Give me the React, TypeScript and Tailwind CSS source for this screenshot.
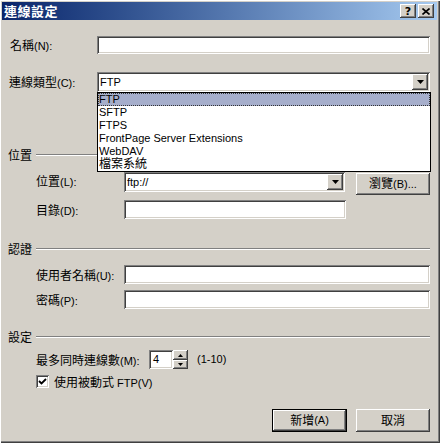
import React from "react";

const CJK = /([\u3000-\u9fff\uff00-\uffef]+)/;

function T({ children }: { children: string }) {
  const parts = children.split(CJK).filter((p) => p.length > 0);
  return (
    <>
      {parts.map((p, i) =>
        CJK.test(p) ? (
          <span key={i} className="text-[12px]">
            {p}
          </span>
        ) : (
          <span key={i} className="text-[11px]">
            {p}
          </span>
        )
      )}
    </>
  );
}

const SUNK =
  "shadow-[inset_1px_1px_#808080,inset_-1px_-1px_#ffffff,inset_2px_2px_#404040,inset_-2px_-2px_#d4d0c8]";
const RAISED =
  "shadow-[inset_-1px_-1px_#404040,inset_1px_1px_#ffffff,inset_-2px_-2px_#808080,inset_2px_2px_#d4d0c8]";

function DownArrow() {
  return (
    <svg width="7" height="4" viewBox="0 0 7 4">
      <polygon points="0,0 7,0 3.5,4" fill="#000" />
    </svg>
  );
}

function Header({ text, mt }: { text: string; mt: string }) {
  return (
    <div className={`flex items-center h-[13px] ${mt}`}>
      <span className="ml-[6px] leading-none">
        <T>{text}</T>
      </span>
      <div className="flex-1 ml-[4px] mr-[7px] h-[2px] border-t border-t-[#808080] border-b border-b-white" />
    </div>
  );
}

export default function App() {
  return (
    <div className="w-[440px] h-[443px] bg-[#d4d0c8] pl-[2px] pt-[2px] pr-[3px] pb-[3px] flex flex-col text-black font-['Liberation_Sans','Noto_Sans_CJK_TC',sans-serif] shadow-[inset_1px_1px_#ffffff,inset_-1px_-1px_#404040,inset_-2px_-2px_#808080]">
      {/* Title bar */}
      <div className="h-[18px] flex items-center bg-linear-to-r from-[#0a246a] to-[#a6caf0] pl-[2px] pr-[3px]">
        <span className="text-white font-bold text-[13px] leading-none tracking-[0.5px]">連線設定</span>
        <div className="flex-1" />
        <div className={`w-[16px] h-[14px] bg-[#d4d0c8] ${RAISED} flex items-center justify-center`}>
          <span className="text-[11px] font-bold leading-none font-['DejaVu_Sans',sans-serif]">?</span>
        </div>
        <div className={`ml-[2px] w-[16px] h-[14px] bg-[#d4d0c8] ${RAISED} flex items-center justify-center`}>
          <svg width="8" height="7" viewBox="0 0 8 7">
            <path d="M0.5 0.5 L7.5 6.5 M7.5 0.5 L0.5 6.5" stroke="#000" strokeWidth="1.6" />
          </svg>
        </div>
      </div>

      {/* Body */}
      <div className="flex flex-col">
        {/* Name */}
        <div className="flex items-center mt-[16px] h-[18px]">
          <div className="ml-[8px] w-[87px]">
            <T>名稱(N):</T>
          </div>
          <div className={`w-[333px] h-[18px] bg-white ${SUNK}`} />
        </div>

        {/* Type */}
        <div className="flex items-center mt-[18px] h-[20px]">
          <div className="ml-[7px] w-[88px]">
            <T>連線類型(C):</T>
          </div>
          <div className="relative w-[333px] h-[20px]">
            <div className={`w-full h-full bg-white ${SUNK} flex items-center pl-[3px] pr-[2px]`}>
              <span className="flex-1 text-[11px] leading-none">FTP</span>
              <div className={`w-[16px] h-[16px] bg-[#d4d0c8] ${RAISED} flex items-center justify-center`}>
                <DownArrow />
              </div>
            </div>
            <div className="absolute left-0 top-[20px] w-[334px] h-[80px] bg-white border border-black z-10 flex flex-col text-[11px]">
              <div className="h-[13px] leading-[12px] pl-[1px] bg-[#a6aecb] outline outline-1 outline-dotted outline-[#333] -outline-offset-1">FTP</div>
              <div className="h-[13px] leading-[13px] pl-[1px]">SFTP</div>
              <div className="h-[13px] leading-[13px] pl-[1px]">FTPS</div>
              <div className="h-[13px] leading-[13px] pl-[1px]">FrontPage Server Extensions</div>
              <div className="h-[13px] leading-[13px] pl-[1px]">WebDAV</div>
              <div className="h-[13px] leading-[13px] pl-[1px] text-[12px]">檔案系統</div>
            </div>
          </div>
        </div>

        <Header text="位置" mt="mt-[56px]" />

        {/* Location */}
        <div className="flex items-start mt-[11px] h-[28px]">
          <div className="ml-[34px] w-[88px] h-[20px] flex items-center">
            <T>位置(L):</T>
          </div>
          <div className={`w-[221px] h-[20px] bg-white ${SUNK} flex items-center pl-[3px] pr-[2px]`}>
            <span className="flex-1 text-[11px] leading-none">ftp://</span>
            <div className={`w-[16px] h-[16px] bg-[#d4d0c8] ${RAISED} flex items-center justify-center`}>
              <DownArrow />
            </div>
          </div>
          <div className={`ml-[11px] mt-[1px] w-[74px] h-[22px] bg-[#d4d0c8] ${RAISED} flex items-center justify-center`}>
            <T>瀏覽(B)...</T>
          </div>
        </div>

        {/* Directory */}
        <div className="flex items-center h-[19px]">
          <div className="ml-[34px] w-[88px]">
            <T>目錄(D):</T>
          </div>
          <div className={`w-[222px] h-[19px] bg-white ${SUNK}`} />
        </div>

        <Header text="認證" mt="mt-[23px]" />

        <div className="flex items-center mt-[10px] h-[19px]">
          <div className="ml-[34px] w-[88px]">
            <T>使用者名稱(U):</T>
          </div>
          <div className={`w-[306px] h-[19px] bg-white ${SUNK}`} />
        </div>

        <div className="flex items-center mt-[6px] h-[19px]">
          <div className="ml-[34px] w-[88px]">
            <T>密碼(P):</T>
          </div>
          <div className={`w-[306px] h-[19px] bg-white ${SUNK}`} />
        </div>

        <Header text="設定" mt="mt-[21px]" />

        {/* Max connections */}
        <div className="flex items-center mt-[7px] h-[19px]">
          <div className="ml-[34px] w-[113px]">
            <T>最多同時連線數(M):</T>
          </div>
          <div className={`w-[24px] h-[19px] bg-white ${SUNK} flex items-center pl-[4px]`}>
            <span className="text-[11px] leading-none">4</span>
          </div>
          <div className="w-[15px] h-[19px] flex flex-col">
            <div className={`h-[10px] bg-[#d4d0c8] ${RAISED} flex items-center justify-center`}>
              <svg width="5" height="3" viewBox="0 0 5 3">
                <polygon points="2.5,0 5,3 0,3" fill="#000" />
              </svg>
            </div>
            <div className={`h-[9px] bg-[#d4d0c8] ${RAISED} flex items-center justify-center`}>
              <svg width="5" height="3" viewBox="0 0 5 3">
                <polygon points="0,0 5,0 2.5,3" fill="#000" />
              </svg>
            </div>
          </div>
          <span className="ml-[9px] text-[11px]">(1-10)</span>
        </div>

        {/* Passive */}
        <div className="flex items-center mt-[6px] h-[13px]">
          <div className={`ml-[34px] w-[13px] h-[13px] bg-white ${SUNK} flex items-center justify-center`}>
            <svg width="9" height="9" viewBox="0 0 9 9">
              <path d="M1 4 L3.5 6.5 L8 2" stroke="#000" strokeWidth="1.8" fill="none" />
            </svg>
          </div>
          <span className="ml-[5px] leading-none">
            <T>使用被動式 FTP(V)</T>
          </span>
        </div>

        {/* Buttons */}
        <div className="flex justify-end items-center mt-[21px] h-[23px] pr-[7px] gap-[9px]">
          <div className="w-[75px] h-[23px] border border-black">
            <div className={`w-full h-full bg-[#d4d0c8] ${RAISED} flex items-center justify-center`}>
              <T>新增(A)</T>
            </div>
          </div>
          <div className={`w-[74px] h-[23px] bg-[#d4d0c8] ${RAISED} flex items-center justify-center`}>
            <T>取消</T>
          </div>
        </div>
      </div>
    </div>
  );
}
